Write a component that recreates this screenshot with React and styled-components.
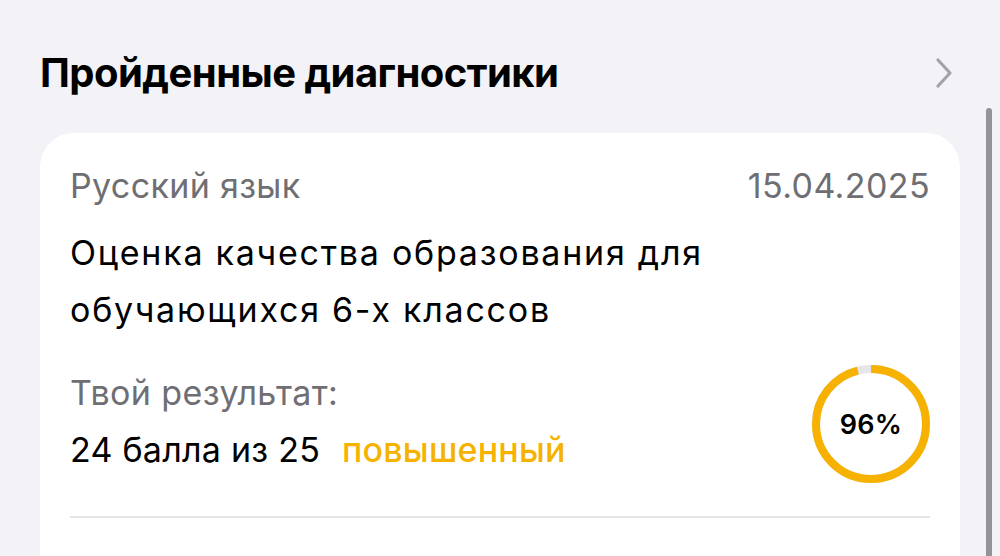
import React from "react";
import styled, { createGlobalStyle } from "styled-components";

const Global = createGlobalStyle`
  html, body { margin: 0; padding: 0; }
  body {
    background: #f2f2f7;
    font-family: Inter, "Noto Sans", sans-serif;
    -webkit-font-smoothing: antialiased;
    overflow: hidden;
  }
`;

const Page = styled.div`
  position: relative;
  width: 1000px;
  height: 556px;
  overflow: hidden;
  background: #f2f2f7;
  padding-top: 49px;
  box-sizing: border-box;
`;

const Header = styled.div`
  display: flex;
  align-items: center;
  justify-content: space-between;
  padding: 0 46px 0 40px;
  height: 48px;
`;

const Title = styled.h2`
  margin: 0;
  font-size: 40px;
  line-height: 48px;
  font-weight: 700;
  color: #000;
  letter-spacing: -0.55px;
`;

const Card = styled.div`
  margin: 36px 40px 0;
  background: #fff;
  border-radius: 34px;
  padding: 24px 30px 0;
  height: 600px;
  box-sizing: border-box;
`;

const Row = styled.div`
  display: flex;
  justify-content: space-between;
  align-items: baseline;
`;

const Muted = styled.div`
  font-size: 34px;
  line-height: 57px;
  color: #6e6e73;
  letter-spacing: ${(p) => p.$ls || "0.35px"};
`;

const Name = styled.div`
  margin-top: 10px;
  font-size: 34px;
  line-height: 57px;
  color: #000;
  letter-spacing: 1.75px;
`;

const ResultRow = styled.div`
  display: flex;
  justify-content: space-between;
  align-items: center;
  margin-top: 23px;
  padding-bottom: 35px;
  border-bottom: 2px solid #e5e5ea;
`;

const Score = styled.div`
  font-size: 34px;
  line-height: 57px;
  color: #000;
  display: flex;
  gap: 22px;
  letter-spacing: 0.25px;
`;

const Level = styled.span`
  color: #f5b300;
  font-weight: 500;
  letter-spacing: 0.2px;
`;

const Ring = styled.div`
  position: relative;
  width: 120px;
  height: 120px;
  margin: 3px -1px -3px 0;
  display: flex;
  align-items: center;
  justify-content: center;
`;

const RingSvg = styled.svg`
  position: absolute;
  inset: 0;
`;

const RingLabel = styled.span`
  position: relative;
  font-size: 27px;
  font-weight: 600;
  color: #000;
  letter-spacing: 0.3px;
`;

const Scrollbar = styled.div`
  position: absolute;
  right: 8px;
  top: 108px;
  width: 6px;
  height: 500px;
  border-radius: 3px;
  background: #939398;
`;

function Progress({ value }) {
  const r = 55;
  const c = 2 * Math.PI * r;
  const filled = (c * value) / 100;
  return (
    <Ring>
      <RingSvg width="120" height="120" viewBox="0 0 120 120">
        <circle cx="60" cy="60" r={r} fill="none" stroke="#e5e5ea" strokeWidth="8" />
        <circle
          cx="60"
          cy="60"
          r={r}
          fill="none"
          stroke="#f7b100"
          strokeWidth="8"
          strokeDasharray={`${filled} ${c}`}
          transform="rotate(-90 60 60)"
        />
      </RingSvg>
      <RingLabel>{value}%</RingLabel>
    </Ring>
  );
}

export default function App() {
  return (
    <>
      <Global />
      <Page>
        <Header>
          <Title>Пройденные диагностики</Title>
          <svg width="20" height="32" viewBox="0 0 20 32">
            <path d="M4 3 L16 16 L4 29" fill="none" stroke="#a3a3a8" strokeWidth="3.2" strokeLinecap="round" strokeLinejoin="round" />
          </svg>
        </Header>
        <Card>
          <Row>
            <Muted>Русский язык</Muted>
            <Muted $ls="0.4px">15.04.2025</Muted>
          </Row>
          <Name>
            Оценка качества образования для
            <br />
            обучающихся 6-х классов
          </Name>
          <ResultRow>
            <div>
              <Muted $ls="0.4px">Твой результат:</Muted>
              <Score>
                <span>24 балла из 25</span>
                <Level>повышенный</Level>
              </Score>
            </div>
            <Progress value={96} />
          </ResultRow>
        </Card>
        <Scrollbar />
      </Page>
    </>
  );
}
